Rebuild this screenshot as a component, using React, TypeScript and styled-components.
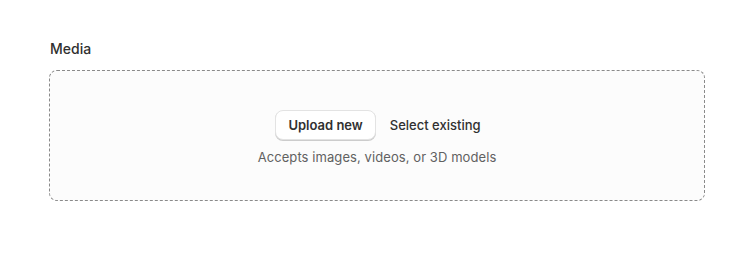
import React from "react";
import styled, { createGlobalStyle } from "styled-components";

const Global = createGlobalStyle`
  html, body { margin: 0; padding: 0; background: #ffffff; }
  body { font-family: Inter, "Noto Sans", sans-serif; color: #303030; }
`;

const Page = styled.div`
  padding: 39px 51px 0 49px;
  display: flex;
  flex-direction: column;
  gap: 11px;
`;

const Label = styled.label`
  font-size: 14px;
  line-height: 20px;
  font-weight: 450;
  color: #303030;
  padding-left: 1px;
`;

const DropZone = styled.div`
  box-sizing: border-box;
  height: 131px;
  border: 1px dashed #8a8a8a;
  border-radius: 8px;
  background: #fcfcfc;
  display: flex;
  flex-direction: column;
  align-items: center;
  justify-content: center;
  gap: 7px;
  padding-top: 5px;
`;

const Actions = styled.div`
  display: flex;
  align-items: center;
  gap: 14px;
  padding-left: 2px;
`;

const Button = styled.button<{ $variant?: "secondary" | "plain" }>`
  font-family: inherit;
  font-size: 13px;
  line-height: 20px;
  height: 30px;
  padding: ${(p) => (p.$variant === "plain" ? "0" : "0 12px")};
  border-radius: 8px;
  cursor: pointer;
  color: #303030;
  font-weight: ${(p) => (p.$variant === "plain" ? 500 : 600)};
  background: ${(p) => (p.$variant === "plain" ? "transparent" : "#ffffff")};
  border: ${(p) => (p.$variant === "plain" ? "none" : "1px solid #e3e3e3")};
  box-shadow: ${(p) =>
    p.$variant === "plain" ? "none" : "0 1px 0 0 #cccccc"};
`;

const Hint = styled.span`
  font-size: 13px;
  line-height: 20px;
  color: #616161;
  letter-spacing: 0.08px;
`;

export default function App() {
  return (
    <>
      <Global />
      <Page>
        <Label>Media</Label>
        <DropZone>
          <Actions>
            <Button>Upload new</Button>
            <Button $variant="plain">Select existing</Button>
          </Actions>
          <Hint>Accepts images, videos, or 3D models</Hint>
        </DropZone>
      </Page>
    </>
  );
}
